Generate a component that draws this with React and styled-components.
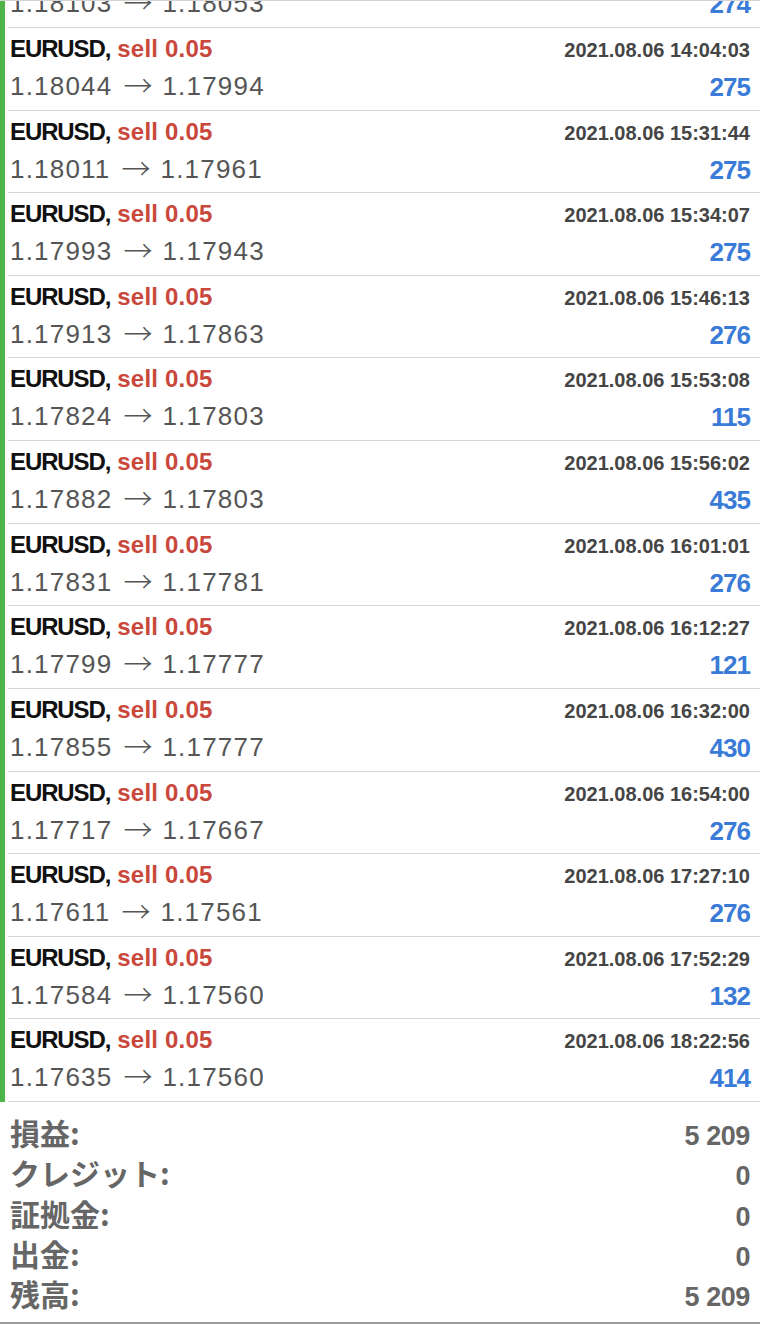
import React from "react";
import styled, { createGlobalStyle } from "styled-components";

const GlobalStyle = createGlobalStyle`
  html, body {
    margin: 0;
    padding: 0;
    background: #ffffff;
    overflow: hidden;
  }
`;

const Screen = styled.div`
  width: 760px;
  height: 1324px;
  overflow: hidden;
  box-sizing: border-box;
  border-top: 1px solid #d4d4d4;
  border-bottom: 2px solid #9a9a9a;
  font-family: "Liberation Sans", Arial, sans-serif;
  display: flex;
  flex-direction: column;
`;

const List = styled.div`
  margin-top: -55.6px;
  display: flex;
  flex-direction: column;
`;

const Row = styled.div`
  display: flex;
  height: 82.62px;
  flex-shrink: 0;
`;

const Marker = styled.div`
  width: 5px;
  background: #4db447;
  flex-shrink: 0;
`;

const Body = styled.div`
  flex: 1;
  margin-left: 3px;
  padding: 2px 10px 0 2px;
  border-bottom: 1px solid #d6d6d6;
  display: flex;
  flex-direction: column;
`;

const Line = styled.div`
  display: flex;
  justify-content: space-between;
  align-items: baseline;
  height: ${(p) => p.$h}px;
  line-height: ${(p) => p.$h}px;
`;

const Symbol = styled.span`
  font-size: 24px;
  font-weight: bold;
  color: #111111;
  letter-spacing: -1.1px;
`;

const Side = styled.span`
  font-size: 24px;
  font-weight: bold;
  color: #c9473b;
  margin-left: 7px;
  letter-spacing: 0.2px;
`;

const Time = styled.span`
  font-size: 20px;
  font-weight: bold;
  color: #454545;
`;

const Prices = styled.span`
  font-size: 26px;
  color: #555555;
  letter-spacing: 1.2px;
`;

const Arrow = styled.span`
  display: inline-block;
  position: relative;
  top: 2px;
  font-family: "Noto Sans CJK JP", sans-serif;
  font-size: 29px;
  font-weight: 300;
  line-height: 1;
  letter-spacing: 0;
  margin: 0 10px 0 11px;
`;

const Profit = styled.span`
  font-size: 26px;
  font-weight: bold;
  color: #3a7bd8;
  letter-spacing: -1px;
  position: relative;
  top: 1px;
`;

const Summary = styled.div`
  padding: 10px 10px 0 10px;
  display: flex;
  flex-direction: column;
`;

const SumRow = styled.div`
  display: flex;
  justify-content: space-between;
  align-items: baseline;
  height: 40.3px;
  line-height: 40px;
  color: #666666;
`;

const Label = styled.span`
  font-family: "Noto Sans CJK JP", "Liberation Sans", sans-serif;
  font-size: 30px;
  font-weight: bold;
`;

const Value = styled.span`
  font-size: 27px;
  font-weight: bold;
  letter-spacing: -0.4px;
`;

const trades = [
  ["13:58:40", "1.18103", "1.18053", "274"],
  ["14:04:03", "1.18044", "1.17994", "275"],
  ["15:31:44", "1.18011", "1.17961", "275"],
  ["15:34:07", "1.17993", "1.17943", "275"],
  ["15:46:13", "1.17913", "1.17863", "276"],
  ["15:53:08", "1.17824", "1.17803", "115"],
  ["15:56:02", "1.17882", "1.17803", "435"],
  ["16:01:01", "1.17831", "1.17781", "276"],
  ["16:12:27", "1.17799", "1.17777", "121"],
  ["16:32:00", "1.17855", "1.17777", "430"],
  ["16:54:00", "1.17717", "1.17667", "276"],
  ["17:27:10", "1.17611", "1.17561", "276"],
  ["17:52:29", "1.17584", "1.17560", "132"],
  ["18:22:56", "1.17635", "1.17560", "414"],
];

const totals = [
  ["損益:", "5 209"],
  ["クレジット:", "0"],
  ["証拠金:", "0"],
  ["出金:", "0"],
  ["残高:", "5 209"],
];

export default function App() {
  return (
    <>
      <GlobalStyle />
      <Screen>
        <List>
          {trades.map(([time, open, close, profit]) => (
            <Row key={time}>
              <Marker />
              <Body>
                <Line $h={38}>
                  <span>
                    <Symbol>EURUSD,</Symbol>
                    <Side>sell 0.05</Side>
                  </span>
                  <Time>2021.08.06 {time}</Time>
                </Line>
                <Line $h={36}>
                  <Prices>
                    {open}
                    <Arrow>→</Arrow>
                    {close}
                  </Prices>
                  <Profit>{profit}</Profit>
                </Line>
              </Body>
            </Row>
          ))}
        </List>
        <Summary>
          {totals.map(([label, value]) => (
            <SumRow key={label}>
              <Label>{label}</Label>
              <Value>{value}</Value>
            </SumRow>
          ))}
        </Summary>
      </Screen>
    </>
  );
}
